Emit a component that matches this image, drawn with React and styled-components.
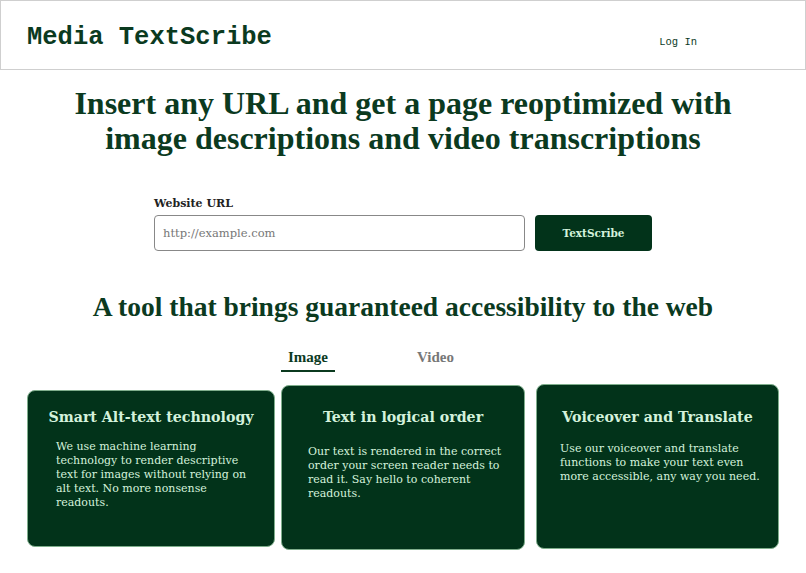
import React from "react"
import styled, { createGlobalStyle } from "styled-components"

const GlobalStyle = createGlobalStyle`
  body {
    margin: 0;
    background: #fff;
    font-family: "DejaVu Serif", serif;
  }
`

const green = "#0b3a1f"
const cardGreen = "#02331a"
const mint = "#d4f2dc"

const Header = styled.header`
  display: flex;
  align-items: center;
  justify-content: space-between;
  height: 64px;
  border: 1px solid #cfcfcf;
  padding: 4px 108px 0 26px;
`

const Logo = styled.h1`
  margin: 0;
  font-family: "Liberation Mono", monospace;
  font-weight: bold;
  font-size: 25.5px;
  color: ${green};
`

const LoginLink = styled.a`
  font-family: "Liberation Mono", monospace;
  font-size: 10.5px;
  color: ${green};
  text-decoration: none;
  margin-top: 10px;
`

const Main = styled.main`
  display: flex;
  flex-direction: column;
  align-items: center;
`

const Hero = styled.h2`
  margin: 16px 0 0;
  text-align: center;
  font-family: "Liberation Serif", serif;
  font-size: 32px;
  line-height: 35px;
  font-weight: bold;
  color: ${green};
`

const Form = styled.form`
  display: flex;
  flex-direction: column;
  width: 498px;
  margin-top: 41px;
`

const Label = styled.label`
  font-size: 11px;
  font-weight: bold;
  color: #222;
  margin-bottom: 5px;
`

const Row = styled.div`
  display: flex;
  gap: 10px;
`

const UrlInput = styled.input`
  flex: 1;
  height: 36px;
  box-sizing: border-box;
  border: 1px solid #888;
  border-radius: 4px;
  padding: 0 8px;
  font-family: "DejaVu Serif", serif;
  font-size: 11.5px;
  &::placeholder {
    color: #777;
  }
`

const Submit = styled.button`
  width: 117px;
  height: 36px;
  border: none;
  border-radius: 4px;
  background: ${cardGreen};
  color: ${mint};
  font-family: "DejaVu Serif", serif;
  font-size: 10.5px;
  font-weight: bold;
`

const SubHero = styled.h2`
  margin: 40px 0 0;
  font-family: "Liberation Serif", serif;
  font-size: 27.5px;
  font-weight: bold;
  color: ${green};
`

const Tabs = styled.div`
  display: flex;
  gap: 75px;
  margin-top: 26px;
  margin-left: -64px;
`

const Tab = styled.button`
  background: none;
  border: none;
  padding: 0 7px 4px;
  font-family: "Liberation Serif", serif;
  font-size: 15px;
  font-weight: bold;
  color: ${p => (p.$active ? green : "#777")};
  border-bottom: 2px solid ${p => (p.$active ? green : "transparent")};
`

const Cards = styled.div`
  display: flex;
  align-items: flex-start;
  margin-top: 12px;
`

const Card = styled.section`
  box-sizing: border-box;
  background: ${cardGreen};
  border: 1px solid #7fae8c;
  border-radius: 8px;
  width: ${p => p.$w}px;
  height: ${p => p.$h}px;
  margin-top: ${p => p.$top}px;
  margin-left: ${p => p.$ml}px;
  padding: ${p => p.$pt}px ${p => p.$pr}px 0 ${p => p.$pl}px;
  color: ${mint};
`

const CardTitle = styled.h3`
  margin: 0 -${p => p.$pr}px 0 -${p => p.$pl}px;
  text-align: center;
  font-size: 14.2px;
  line-height: 18px;
  font-weight: bold;
`

const CardText = styled.p`
  margin: ${p => p.$gap}px 0 0;
  font-size: 11px;
  line-height: 14px;
`

const cards = [
  {
    title: "Smart Alt-text technology",
    text: "We use machine learning technology to render descriptive text for images without relying on alt text. No more nonsense readouts.",
    w: 248, h: 157, top: 6, ml: 0, pt: 17, pl: 28, pr: 24, gap: 14,
  },
  {
    title: "Text in logical order",
    text: "Our text is rendered in the correct order your screen reader needs to read it. Say hello to coherent readouts.",
    w: 244, h: 165, top: 1, ml: 6, pt: 22, pl: 26, pr: 22, gap: 19,
  },
  {
    title: "Voiceover and Translate",
    text: "Use our voiceover and translate functions to make your text even more accessible, any way you need.",
    w: 243, h: 165, top: 0, ml: 11, pt: 23, pl: 23, pr: 18, gap: 16,
  },
]

export default function App() {
  return (
    <>
      <GlobalStyle />
      <Header>
        <Logo>Media TextScribe</Logo>
        <LoginLink href="#">Log In</LoginLink>
      </Header>
      <Main>
        <Hero>
          Insert any URL and get a page reoptimized with
          <br />
          image descriptions and video transcriptions
        </Hero>
        <Form onSubmit={e => e.preventDefault()}>
          <Label htmlFor="url">Website URL</Label>
          <Row>
            <UrlInput id="url" placeholder="http://example.com" />
            <Submit type="submit">TextScribe</Submit>
          </Row>
        </Form>
        <SubHero>A tool that brings guaranteed accessibility to the web</SubHero>
        <Tabs>
          <Tab $active>Image</Tab>
          <Tab>Video</Tab>
        </Tabs>
        <Cards>
          {cards.map(c => (
            <Card key={c.title} $w={c.w} $h={c.h} $top={c.top} $ml={c.ml} $pt={c.pt} $pl={c.pl} $pr={c.pr}>
              <CardTitle $pl={c.pl} $pr={c.pr}>{c.title}</CardTitle>
              <CardText $gap={c.gap}>{c.text}</CardText>
            </Card>
          ))}
        </Cards>
      </Main>
    </>
  )
}
